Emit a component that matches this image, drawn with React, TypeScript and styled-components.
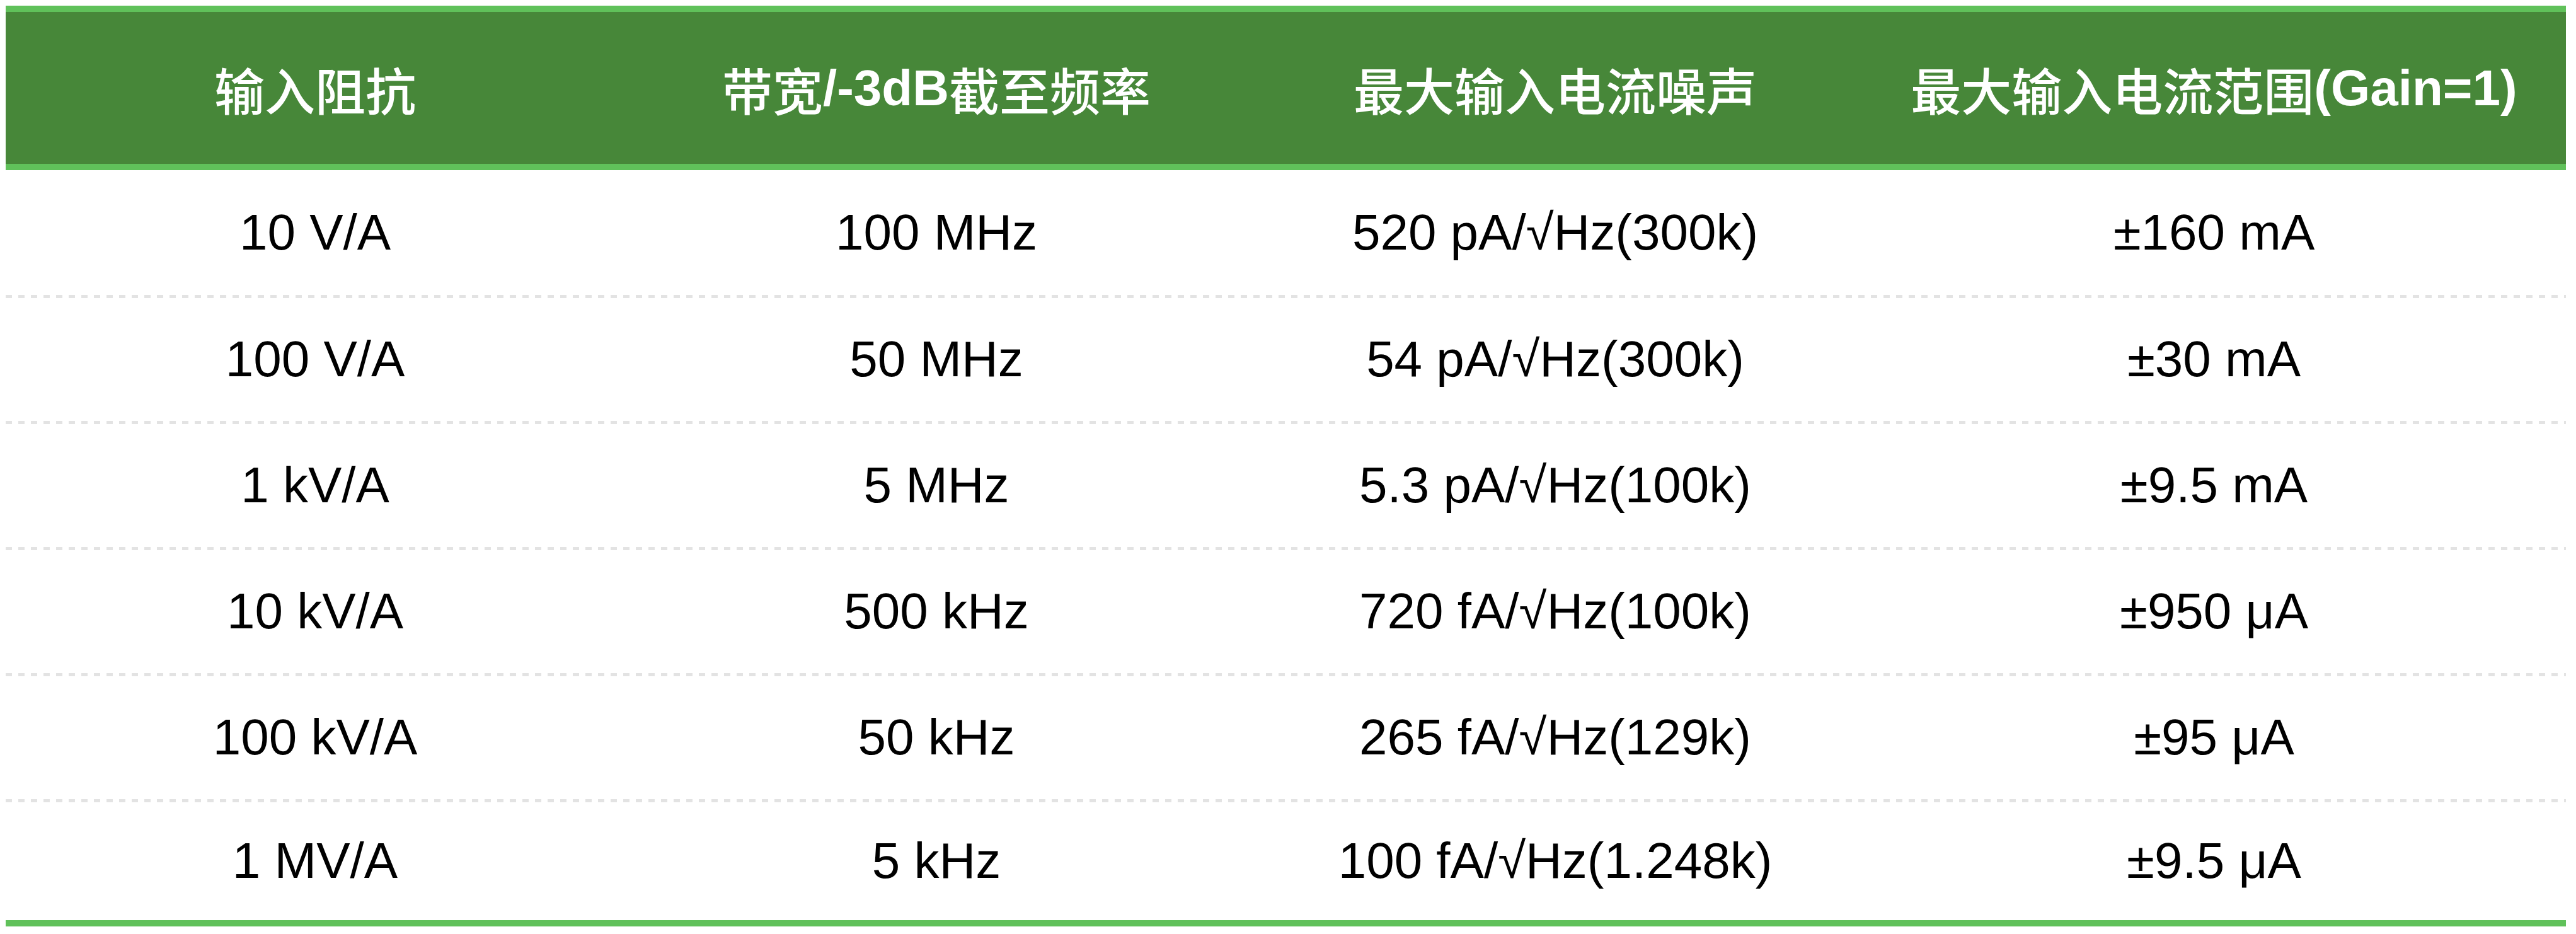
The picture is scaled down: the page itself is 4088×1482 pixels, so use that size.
import React from 'react';
import styled, { createGlobalStyle } from 'styled-components';

const GlobalStyle = createGlobalStyle`
  html, body {
    margin: 0;
    padding: 0;
    background: #ffffff;
  }

  body {
    font-family: 'Liberation Sans', 'Noto Sans CJK SC', Arial, sans-serif;
  }
`;

const Page = styled.div`
  padding: 9px 16px 0 9px;
`;

const SpecTable = styled.div`
  display: flex;
  flex-direction: column;
  border-bottom: 10px solid #60c15a;
`;

const columns = '982fr 990fr 974fr 1117fr';

const HeaderRow = styled.div`
  display: grid;
  grid-template-columns: ${columns};
  height: 241px;
  background: #478739;
  border-top: 10px solid #60c15a;
  border-bottom: 10px solid #60c15a;
`;

const HeaderCell = styled.div`
  display: flex;
  align-items: center;
  justify-content: center;
  color: #ffffff;
  font-size: 80px;
  font-weight: 700;
  white-space: nowrap;
`;

// the Chinese glyphs in the header are a lighter cut than the latin ones
const Han = styled.span`
  font-weight: 500;
`;

const Row = styled.div`
  display: grid;
  grid-template-columns: ${columns};
  height: 195px;
  padding-bottom: 5px;
  background: repeating-linear-gradient(
      to right,
      #e3e3e3 0 10px,
      transparent 10px 20px
    )
    left bottom / 100% 5px no-repeat;

  &:first-of-type {
    height: 197.5px;
  }

  &:last-of-type {
    height: 187.5px;
    padding-bottom: 0;
    background: none;
  }
`;

const Cell = styled.div`
  display: flex;
  align-items: center;
  justify-content: center;
  color: #000000;
  font-size: 80px;
  white-space: nowrap;
`;

const headers = [
  '输入阻抗',
  '带宽/-3dB截至频率',
  '最大输入电流噪声',
  '最大输入电流范围(Gain=1)',
];

const rows = [
  ['10 V/A', '100 MHz', '520 pA/√Hz(300k)', '±160 mA'],
  ['100 V/A', '50 MHz', '54 pA/√Hz(300k)', '±30 mA'],
  ['1 kV/A', '5 MHz', '5.3 pA/√Hz(100k)', '±9.5 mA'],
  ['10 kV/A', '500 kHz', '720 fA/√Hz(100k)', '±950 μA'],
  ['100 kV/A', '50 kHz', '265 fA/√Hz(129k)', '±95 μA'],
  ['1 MV/A', '5 kHz', '100 fA/√Hz(1.248k)', '±9.5 μA'],
];

function HeaderText({ text }: { text: string }) {
  const parts = text.split(/([\u4e00-\u9fff]+)/).filter(Boolean);
  return (
    <>
      {parts.map((p, i) =>
        /[\u4e00-\u9fff]/.test(p) ? <Han key={i}>{p}</Han> : <span key={i}>{p}</span>
      )}
    </>
  );
}

function App() {
  return (
    <>
      <GlobalStyle />
      <Page>
        <SpecTable>
          <HeaderRow>
            {headers.map((h) => (
              <HeaderCell key={h}>
                <HeaderText text={h} />
              </HeaderCell>
            ))}
          </HeaderRow>
          <div>
            {rows.map((r) => (
              <Row key={r[0]}>
                {r.map((v, i) => (
                  <Cell key={i}>{v}</Cell>
                ))}
              </Row>
            ))}
          </div>
        </SpecTable>
      </Page>
    </>
  );
}

export default App;
